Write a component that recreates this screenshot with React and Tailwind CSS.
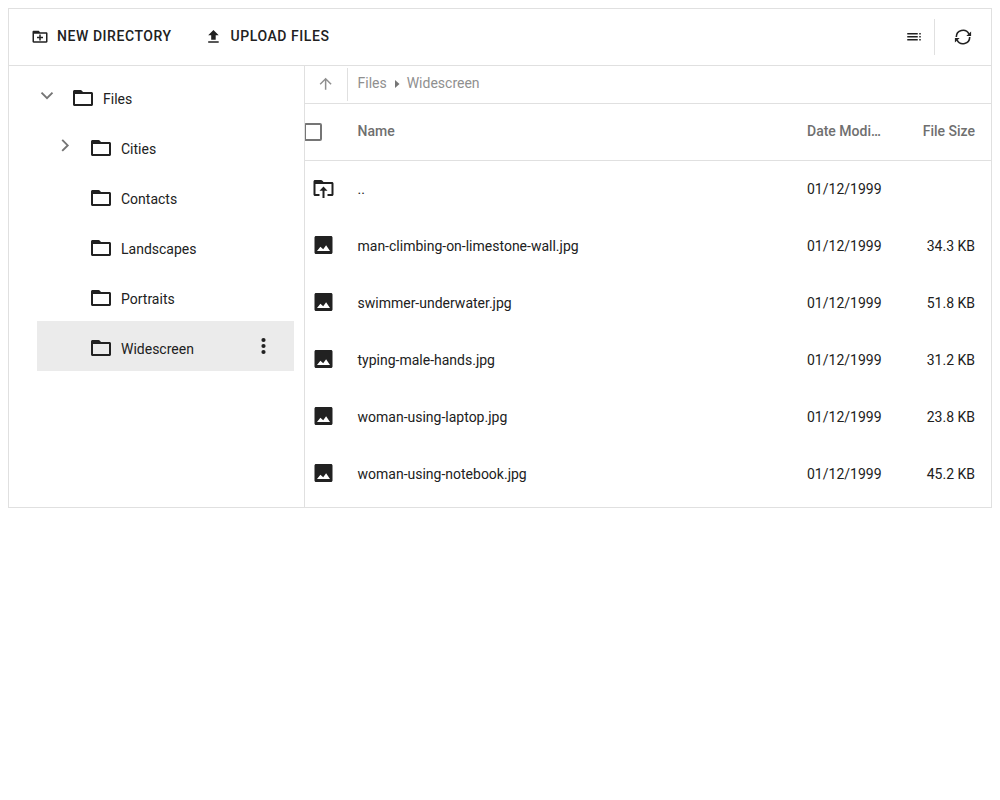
import React from "react";

function Icon({ className = "", viewBox = "0 0 24 24", children }) {
  return (
    <svg viewBox={viewBox} fill="currentColor" className={"shrink-0 " + className}>
      {children}
    </svg>
  );
}

const FOLDER =
  "M20.5 6H12l-1.3-1.5c-.3-.3-.7-.5-1.100-.5H3.500C2.700 4 2 4.700 2 5.500v13c0 .8.700 1.500 1.500 1.500h17c.8 0 1.500-.7 1.500-1.500v-11c0-.8-.7-1.500-1.500-1.500zM20 18H4V8h16v10z";

function FolderIcon({ className }) {
  return (
    <Icon className={className}>
      <path d={FOLDER} />
    </Icon>
  );
}

function NewFolderIcon() {
  return (
    <Icon className="size-[18px]" viewBox="0 0.400 24 24">
      <path d={FOLDER} />
      <path d="M11 9h2v3h3v2h-3v3h-2v-3H8v-2h3z" />
    </Icon>
  );
}

function UploadIcon() {
  return (
    <Icon className="size-[18px]" viewBox="-0.600 0.500 24 24">
      <path d="M5 20h14v-2H5v2zm0-10h4v6h6v-6h4l-7-7-7 7z" />
    </Icon>
  );
}

function DetailsIcon() {
  return (
    <Icon className="size-[18px]" viewBox="0 0.400 24 24">
      <path d="M3 9h14V7H3v2zm0 4h14v-2H3v2zm0 4h14v-2H3v2zm16 0h2v-2h-2v2zm0-10v2h2V7h-2zm0 6h2v-2h-2v2z" />
    </Icon>
  );
}

function RefreshIcon() {
  return (
    <svg viewBox="0 0 18 18" className="size-[18px] shrink-0">
      <path
        d="M2.3 9A6.7 6.7 0 0 1 14.9 5.8M15.7 9A6.7 6.7 0 0 1 3.1 12.2"
        fill="none"
        stroke="currentColor"
        strokeWidth="1.6"
      />
      <path d="M17.100 3.400V8H12.300zM.9 14.600V10H5.700z" fill="currentColor" />
    </svg>
  );
}

function ArrowUpIcon() {
  return (
    <Icon className="size-[18px]" viewBox="0.500 0.400 24 24">
      <path d="M4 12l1.41 1.41L11 7.83V20h2V7.83l5.58 5.59L20 12l-8-8-8 8z" />
    </Icon>
  );
}

function ParentFolderIcon() {
  return (
    <Icon className="size-6" viewBox="-0.500 0 24 24">
      <path d="M20.500 6H12l-1.300-1.500c-.3-.3-.7-.5-1.100-.5H3.500C2.700 4 2 4.700 2 5.500v13c0 .8.700 1.500 1.500 1.500H8v-2H4V8h16v10h-4v2h4.500c.8 0 1.500-.7 1.500-1.500v-11c0-.8-.7-1.500-1.500-1.500z" />
      <path d="M12 10.500l-4 4.200h3V22h2v-7.300h3z" />
    </Icon>
  );
}

function ImageIcon() {
  return (
    <Icon className="size-6" viewBox="-0.500 0 24 24">
      <path
        fillRule="evenodd"
        d="M4.500 3h15c.8 0 1.500.7 1.500 1.500v15c0 .8-.7 1.500-1.500 1.500h-15c-.8 0-1.500-.7-1.500-1.500v-15C3 3.700 3.700 3 4.500 3zM5.500 18h13l-3.900-5.700-2.900 3.900-2.800-2.400z"
      />
    </Icon>
  );
}

function Chevron({ open }) {
  return (
    <svg viewBox="0 0 18 18" className="size-[18px] shrink-0 text-[#757575]" fill="none" stroke="currentColor" strokeWidth="1.900">
      <path d={open ? "M3.500 5.700L9 11.200l5.500-5.500" : "M6.200 2.900l5.500 5.500-5.500 5.500"} />
    </svg>
  );
}

function TreeItem({ label, nested, chevron, selected }) {
  return (
    <div className={"flex h-[50px] w-[257px] " + (selected ? "bg-[#ebebeb] " : "") + (nested ? "pl-[18px]" : "")}>
      <div className="w-[34px] pt-4 pl-px">{chevron && <Chevron open={chevron === "open"} />}</div>
      <div className="pt-[15px]">
        <FolderIcon className="size-6" />
      </div>
      <div className="flex-1 pt-[18px] pl-2 leading-5">{label}</div>
      {selected && (
        <div className="w-[43px] pt-[13px]">
          <Icon className="size-6">
            <circle cx="12.500" cy="6" r="2.100" />
            <circle cx="12.500" cy="12" r="2.100" />
            <circle cx="12.500" cy="18" r="2.100" />
          </Icon>
        </div>
      )}
    </div>
  );
}

const FILES = [
  { name: "..", date: "01/12/1999", size: "", parent: true },
  { name: "man-climbing-on-limestone-wall.jpg", date: "01/12/1999", size: "34.3 KB" },
  { name: "swimmer-underwater.jpg", date: "01/12/1999", size: "51.8 KB" },
  { name: "typing-male-hands.jpg", date: "01/12/1999", size: "31.2 KB" },
  { name: "woman-using-laptop.jpg", date: "01/12/1999", size: "23.8 KB" },
  { name: "woman-using-notebook.jpg", date: "01/12/1999", size: "45.2 KB" },
];

const GRID = "grid grid-cols-[52.500px_1fr_91px_77px] items-center pr-4";

export default function App() {
  return (
    <div className="p-2 font-[Roboto,sans-serif] text-sm text-[#212121]">
      <div className="flex h-[500px] flex-col overflow-hidden border border-[#e0e0e0]">
        <header className="flex h-[57px] shrink-0 items-center border-b border-[#e0e0e0] pl-[22px]">
          <button className="flex items-center gap-2 font-medium tracking-[0.560px]">
            <NewFolderIcon />
            <span className="w-[147px] pb-0.5 text-left leading-5">NEW DIRECTORY</span>
          </button>
          <button className="flex items-center gap-2 font-medium tracking-[0.560px]">
            <UploadIcon />
            <span className="pb-0.5 pl-[0.500px] leading-5">UPLOAD FILES</span>
          </button>
          <div className="ml-auto flex items-center">
            <DetailsIcon />
            <div className="ml-[11px] h-9 w-px bg-[#e0e0e0]" />
            <div className="mr-[19px] ml-[19px]">
              <RefreshIcon />
            </div>
          </div>
        </header>
        <div className="flex min-h-0 flex-1">
          <aside className="w-[296px] shrink-0 border-r border-[#e0e0e0] pt-[5px] pl-7">
            <TreeItem label="Files" chevron="open" />
            <TreeItem label="Cities" nested chevron="closed" />
            <TreeItem label="Contacts" nested />
            <TreeItem label="Landscapes" nested />
            <TreeItem label="Portraits" nested />
            <TreeItem label="Widescreen" nested selected />
          </aside>
          <main className="min-w-0 flex-1 overflow-hidden">
            <nav className="flex h-[38px] items-center border-b border-[#e0e0e0] text-[#8f8f8f]">
              <div className="w-[42px] pb-0.5 pl-[11.500px]">
                <ArrowUpIcon />
              </div>
              <div className="h-[33px] w-px bg-[#e0e0e0]" />
              <span className="pb-[3px] pl-[9.500px] leading-5">Files</span>
              <svg viewBox="0 0 5 8" className="mr-[7px] mb-0.5 ml-2 h-2 w-[5px] text-[#757575]" fill="currentColor">
                <path d="M0 0l4.500 4-4.500 4z" />
              </svg>
              <span className="pb-[3px] leading-5">Widescreen</span>
            </nav>
            <div className={GRID + " h-[57px] border-b border-[#e0e0e0] font-medium text-[#6f6f6f]"}>
              <div>
                <div className="-ml-px size-[18px] rounded-[2px] border-2 border-[#757575]" />
              </div>
              <div className="pb-0.5 leading-5">Name</div>
              <div className="pb-0.5 leading-5 whitespace-nowrap">Date Modi…</div>
              <div className="pb-0.5 text-right leading-5">File Size</div>
            </div>
            {FILES.map((f) => (
              <div key={f.name} className={GRID + " h-[57px]"}>
                <div className="pb-[3px] pl-[6px]">{f.parent ? <ParentFolderIcon /> : <ImageIcon />}</div>
                <div className="pb-0.5 leading-5">{f.name}</div>
                <div className="pb-0.5 leading-5">{f.date}</div>
                <div className="pb-0.5 text-right leading-5">{f.size}</div>
              </div>
            ))}
          </main>
        </div>
      </div>
    </div>
  );
}
